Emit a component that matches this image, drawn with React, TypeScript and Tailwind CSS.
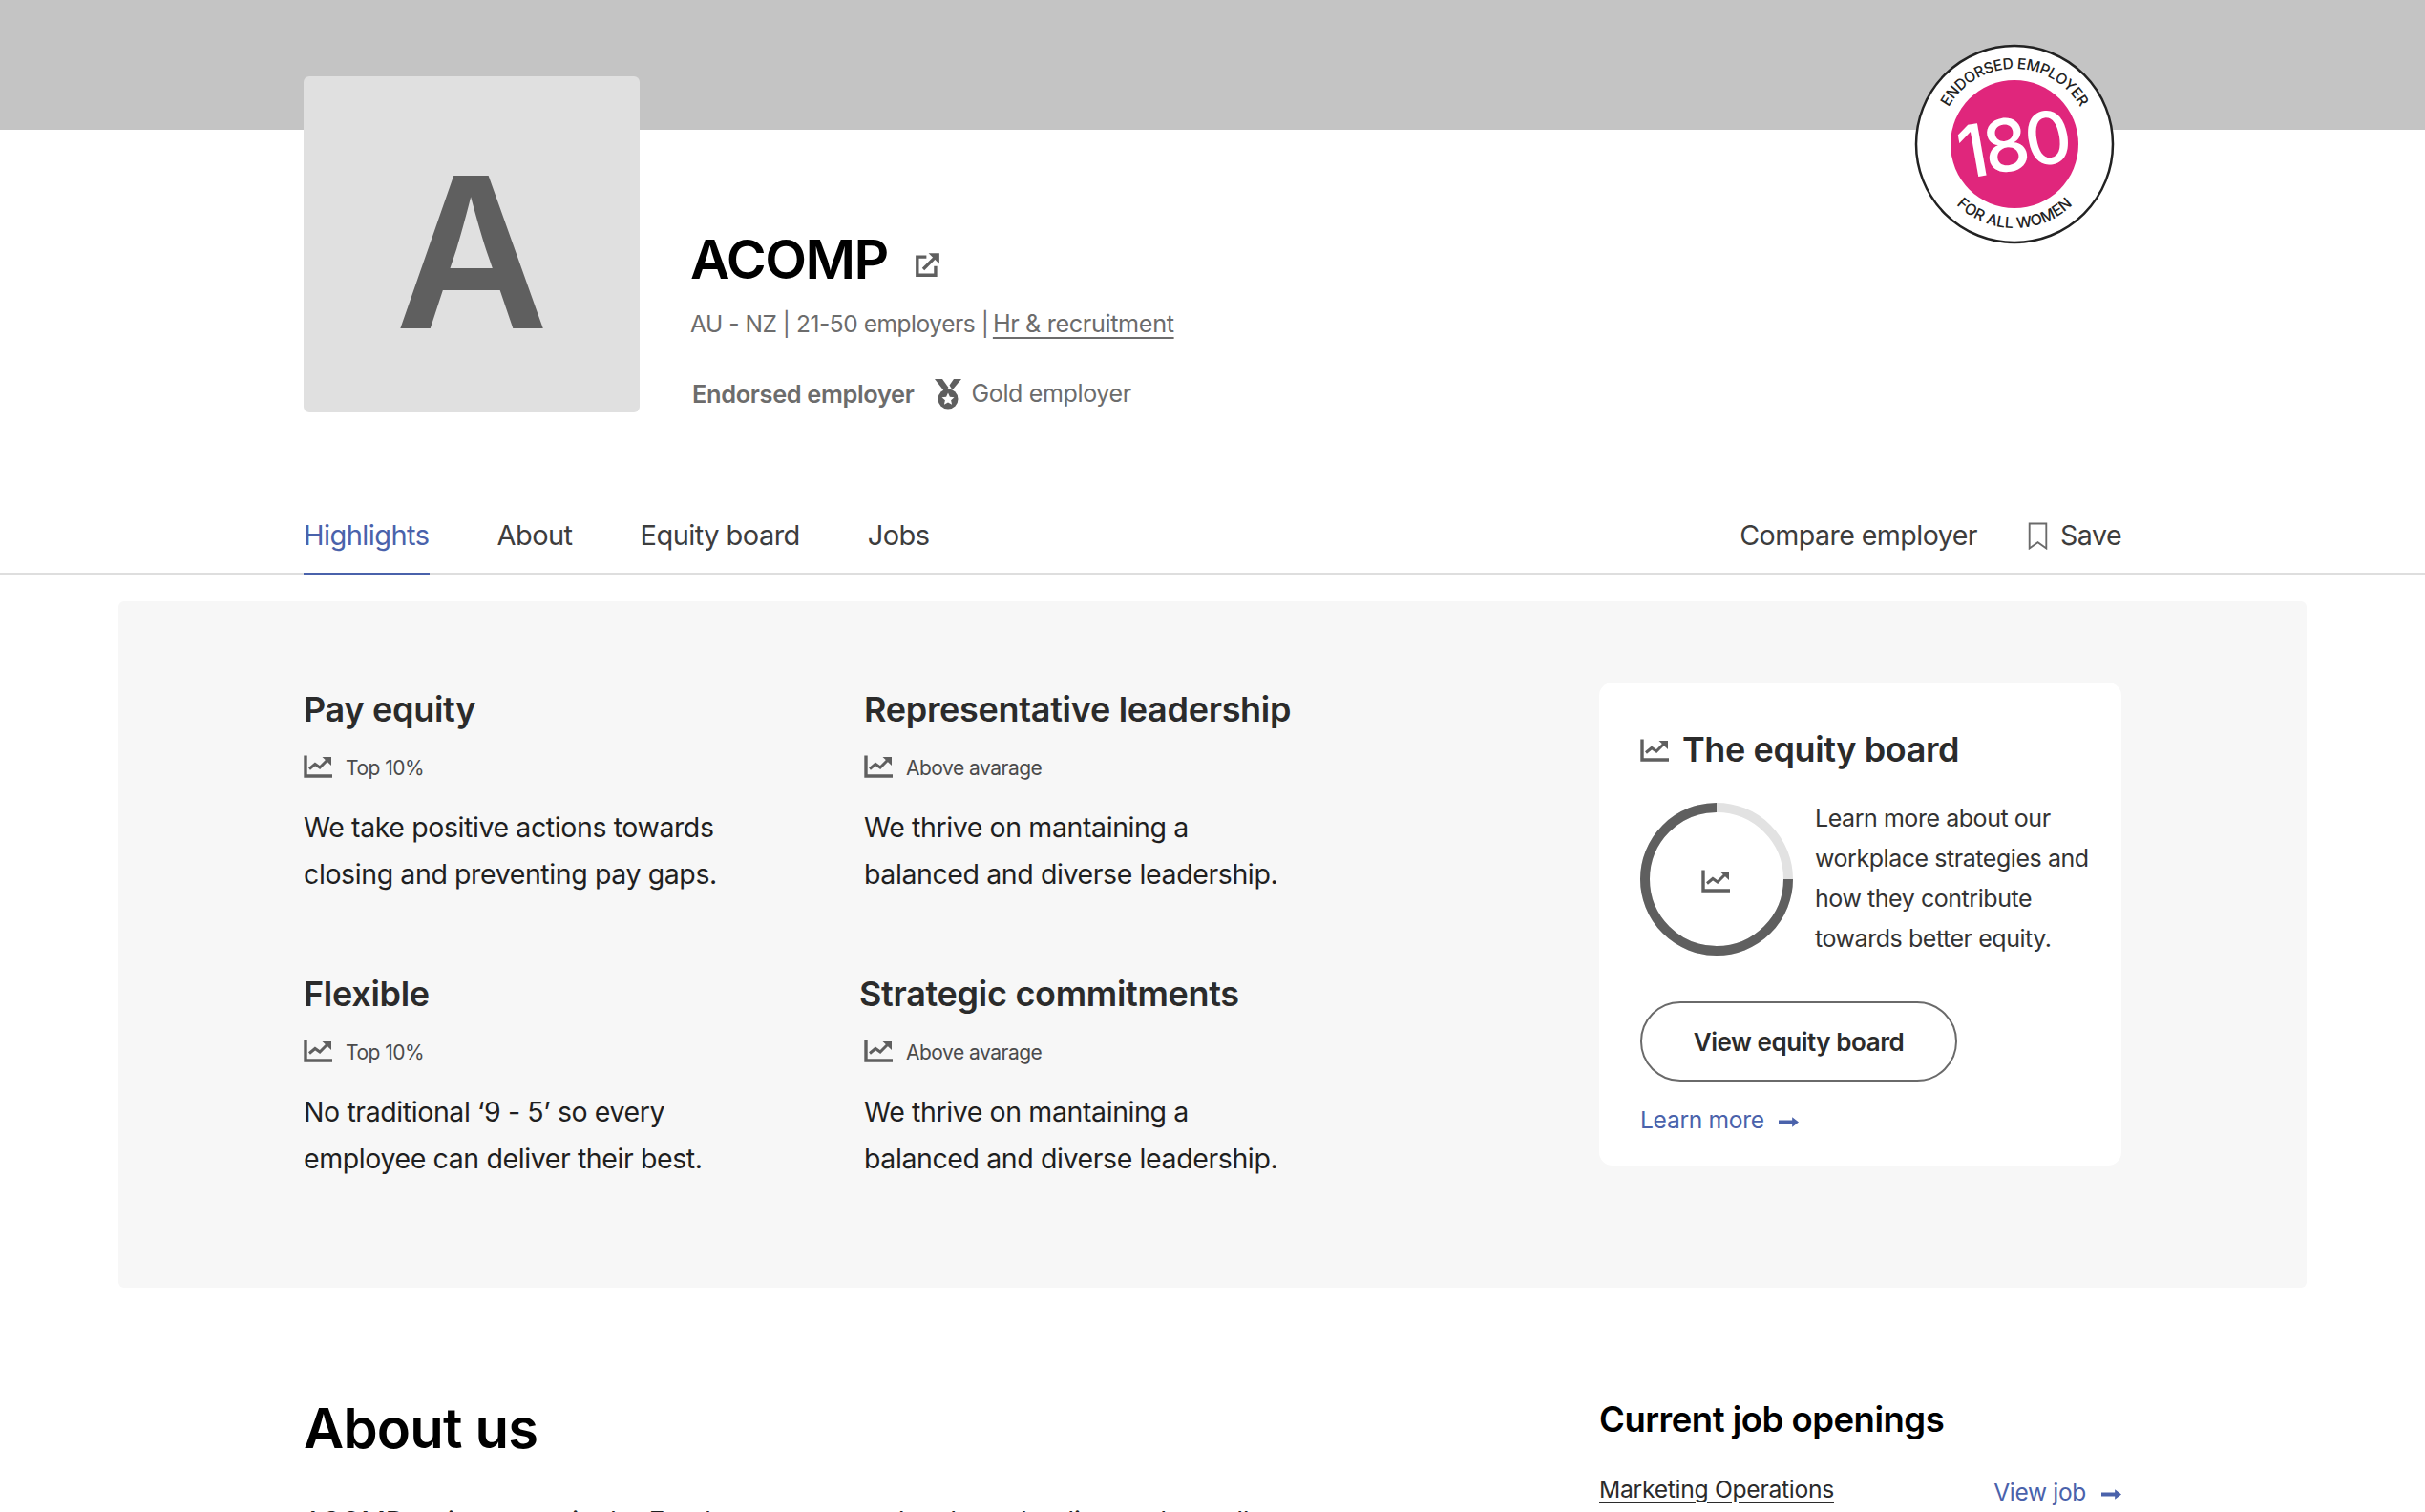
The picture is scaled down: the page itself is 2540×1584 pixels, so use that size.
import React from "react";

const font = { fontFamily: '"Inter", "Noto Sans", sans-serif' };

function ChartIcon({ className = "" }: { className?: string }) {
  return (
    <svg viewBox="0 0 30 24" className={className} fill="none">
      <path d="M2 0.5v21.5h28" stroke="currentColor" strokeWidth="3.4" />
      <path d="M6 14.5l6-5 5 3.5 7.5-7.5" stroke="currentColor" strokeWidth="3" />
      <path d="M19.5 2h9.5v9z" fill="currentColor" />
    </svg>
  );
}

function ArrowIcon({ className = "" }: { className?: string }) {
  return (
    <svg viewBox="0 0 20 12" className={className} fill="currentColor">
      <path d="M0 4.2h13.5V1L20 6l-6.5 5V7.8H0z" />
    </svg>
  );
}

function Badge() {
  return (
    <svg viewBox="0 0 210 210" className="absolute left-[2005px] top-[46px] w-[210px] h-[210px]">
      <defs>
        <path id="arcTop" d="M 26 105 A 79 79 0 0 1 184 105" />
        <path id="arcBottom" d="M 17 105 A 88 88 0 0 0 193 105" />
      </defs>
      <circle cx="105" cy="105" r="103" fill="#fff" stroke="#222" strokeWidth="2.5" />
      <circle cx="105" cy="105" r="67" fill="#e0267c" />
      <text transform="rotate(-10 105 105)" x="103" y="132" textAnchor="middle" fill="#fff" fontSize="76" fontWeight="500" fontFamily="Inter, sans-serif" letterSpacing="-4">180</text>
      <text fontSize="15.5" fill="#222" fontFamily="Inter, sans-serif" fontWeight="500" letterSpacing="-0.3">
        <textPath href="#arcTop" startOffset="50%" textAnchor="middle">ENDORSED EMPLOYER</textPath>
      </text>
      <text fontSize="16" fill="#222" fontFamily="Inter, sans-serif" fontWeight="500">
        <textPath href="#arcBottom" startOffset="50%" textAnchor="middle">FOR ALL WOMEN</textPath>
      </text>
    </svg>
  );
}

function Stat({ title, tag, lines, titleClass = "" }: { title: string; tag: string; lines: string[]; titleClass?: string }) {
  return (
    <div>
      <h3 className={`text-[36px] leading-[44px] font-semibold text-[#2b2b2b] tracking-[-0.3px] whitespace-nowrap ${titleClass}`}>{title}</h3>
      <div className="flex items-center gap-[14px] mt-[25px] h-[30px] text-[#5f5f5f]">
        <ChartIcon className="w-[30px] h-[24px] -mt-[4px]" />
        <span className="text-[21px] tracking-[-0.5px] text-[#4b4b4b]">{tag}</span>
      </div>
      <p className="mt-[22px] text-[28.5px] leading-[49px] text-[#1f1f1f] tracking-[-0.4px]">
        {lines.map((l) => (
          <span key={l} className="block whitespace-nowrap">{l}</span>
        ))}
      </p>
    </div>
  );
}

export default function App() {
  return (
    <div style={font} className="relative h-[1584px] w-[2540px] overflow-hidden bg-white">
      <div className="h-[136px] bg-[#c4c4c4]" />
      <Badge />

      <div className="flex -mt-[56px] pl-[318px]">
        <div className="flex h-[352px] w-[352px] items-center justify-center rounded-[6px] bg-[#e0e0e0] pt-[16px]">
          <span className="text-[220px] leading-none font-semibold text-[#5f5f5f]">A</span>
        </div>
        <div className="ml-[53px] pt-[162px]">
          <div className="flex items-center h-[60px]">
            <h1 className="text-[57px] leading-[60px] font-semibold text-black tracking-[-1.5px]">ACOMP</h1>
            <svg viewBox="0 0 24 24" className="ml-[28px] mt-[10px] w-[27px] h-[27px] text-[#5f5f5f]" fill="none" stroke="currentColor" strokeWidth="3">
              <path d="M11 4.5H2.5v17h17V13" />
              <path d="M8 16L19 5" />
              <path d="M13 1h10v10z" fill="currentColor" stroke="none" />
            </svg>
          </div>
          <div className="mt-[19px] h-[36px] text-[24.5px] leading-[36px] text-[#6c6c6c] tracking-[-0.45px] whitespace-nowrap">
            AU - NZ | 21-50 employers | <span className="ml-[-2px] text-[25.2px] tracking-[-0.35px] underline underline-offset-[5px]">Hr &amp; recruitment</span>
          </div>
          <div className="mt-[38px] flex items-center h-[36px] text-[25px] text-[#6c6c6c] tracking-[-0.35px] whitespace-nowrap">
            <span className="ml-[2px] text-[25.4px] font-semibold">Endorsed employer</span>
            <svg viewBox="0 0 28 32" className="ml-[22px] w-[28px] h-[32px] text-[#5f5f5f]" fill="currentColor">
              <path d="M0 0h8l6.5 9-4 4.5z" />
              <path d="M28 0h-8l-4.5 6.5 3 5z" />
              <circle cx="14" cy="21" r="10.5" />
              <path d="M14 14.5l1.9 4.2 4.6.5-3.4 3.1 1 4.5-4.1-2.3-4.1 2.3 1-4.5-3.4-3.1 4.6-.5z" fill="#fff" />
            </svg>
            <span className="ml-[10px]">Gold employer</span>
          </div>
        </div>
      </div>

      <nav className="mt-[88px] flex h-[82px] items-stretch justify-between border-b-2 border-[#dedede] pl-[318px] pr-[318px] text-[29px] tracking-[-0.55px] text-[#3d3d3d]">
        <div className="flex gap-[71px]">
          <a className="flex items-center pt-[2px] -mb-[2px] border-b-2 border-[#4a62ab] text-[#4a62ab]">Highlights</a>
          <a className="flex items-center pt-[2px]">About</a>
          <a className="flex items-center pt-[2px]">Equity board</a>
          <a className="flex items-center pt-[2px]">Jobs</a>
        </div>
        <div className="flex items-center pt-[2px] text-[28.6px]">
          <span>Compare employer</span>
          <svg viewBox="0 0 20 28" className="ml-[53px] w-[21px] h-[29px] text-[#6a6a6a]" fill="none" stroke="currentColor" strokeWidth="1.8">
            <path d="M1.5 1.5h17v25L10 20.5 1.5 26.5z" />
          </svg>
          <span className="ml-[13px]">Save</span>
        </div>
      </nav>

      <section className="mx-[124px] mt-[28px] flex h-[719px] justify-between rounded-[6px] bg-[#f7f7f7] pl-[194px] pr-[194px] pt-[85px]">
        <div className="grid grid-cols-[587px_500px] grid-rows-[298px_auto] pt-[6px]">
          <Stat title="Pay equity" tag="Top 10%" lines={["We take positive actions towards", "closing and preventing pay gaps."]} />
          <Stat title="Representative leadership" tag="Above avarage" lines={["We thrive on mantaining a", "balanced and diverse leadership."]} />
          <Stat title="Flexible" tag="Top 10%" lines={["No traditional ‘9 - 5’ so every", "employee can deliver their best."]} />
          <Stat title="Strategic commitments" titleClass="-ml-[5px]" tag="Above avarage" lines={["We thrive on mantaining a", "balanced and diverse leadership."]} />
        </div>

        <aside className="h-[506px] w-[547px] rounded-[14px] bg-white pl-[43px] pt-[48px]">
          <div className="flex items-center gap-[14px] h-[44px]">
            <ChartIcon className="w-[30px] h-[24px] mt-[2px] text-[#5f5f5f]" />
            <h2 className="text-[36px] font-semibold text-[#2b2b2b] tracking-[-0.4px]">The equity board</h2>
          </div>
          <div className="mt-[34px] flex">
            <div className="relative h-[160px] w-[160px] shrink-0">
              <svg viewBox="0 0 160 160" className="h-full w-full">
                <circle cx="80" cy="80" r="75" fill="none" stroke="#e2e2e2" strokeWidth="10" />
                <path d="M155 80A75 75 0 1 1 80 5" fill="none" stroke="#5f5f5f" strokeWidth="10" />
              </svg>
              <ChartIcon className="absolute left-[64px] top-[70px] w-[30px] h-[24px] text-[#5f5f5f]" />
            </div>
            <p className="ml-[23px] -mt-[5px] text-[25px] leading-[42px] text-[#333] tracking-[-0.45px] whitespace-nowrap">
              <span className="block">Learn more about our</span>
              <span className="block">workplace strategies and</span>
              <span className="block">how they contribute</span>
              <span className="block">towards better equity.</span>
            </p>
          </div>
          <button className="mt-[45px] flex h-[84px] w-[332px] items-center justify-center rounded-full border-2 border-[#6a6a6a] text-[26px] font-semibold tracking-[-0.45px] text-[#2b2b2b]">
            View equity board
          </button>
          <a className="mt-[22px] flex items-center text-[24.6px] leading-[36px] tracking-[-0.3px] text-[#4a62ab]">
            Learn more
            <ArrowIcon className="ml-[15px] mt-[4px] w-[21px] h-[13px]" />
          </a>
        </aside>
      </section>

      <section className="mt-[111px] flex justify-between pl-[318px] pr-[318px]">
        <div>
          <h2 className="text-[58px] leading-[72px] font-semibold text-black tracking-[-0.8px]">About us</h2>
          <p className="mt-[37px] text-[28.5px] leading-[49px] text-[#1f1f1f] tracking-[-0.35px] whitespace-nowrap">
            ACOMP an innovator in the Employment sector has been leading and equally support
          </p>
        </div>
        <div className="w-[547px] pt-[2px]">
          <h3 className="text-[36.5px] leading-[50px] font-semibold text-black tracking-[-0.5px]">Current job openings</h3>
          <div className="mt-[30px] flex items-start justify-between">
            <span className="text-[24.7px] leading-[36px] text-[#2b2b2b] tracking-[-0.3px] underline underline-offset-[4px]">Marketing Operations</span>
            <a className="mt-[3px] flex items-center text-[24.5px] leading-[36px] tracking-[-0.3px] text-[#4a62ab]">
              View job
              <ArrowIcon className="ml-[16px] mt-[4px] w-[21px] h-[13px]" />
            </a>
          </div>
        </div>
      </section>
    </div>
  );
}
